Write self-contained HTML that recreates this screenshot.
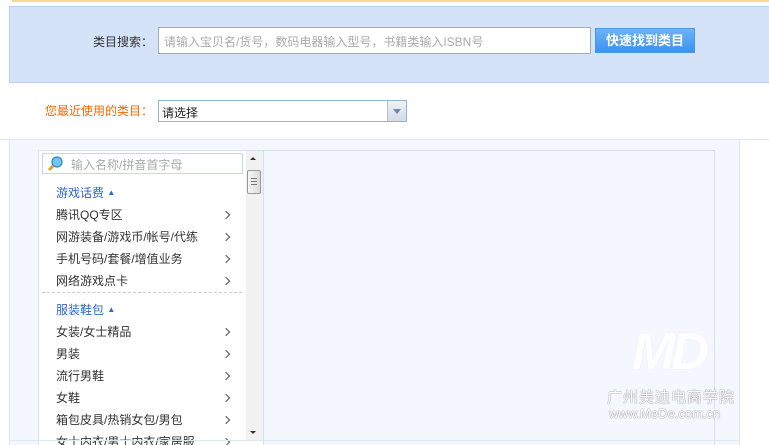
<!DOCTYPE html>
<html><head><meta charset="utf-8"><style>
*{margin:0;padding:0;box-sizing:border-box}
html,body{width:769px;height:445px;overflow:hidden}
body{background:#fff;font-family:"Liberation Sans","Noto Sans CJK SC",sans-serif;font-size:12px;color:#333;position:relative}
.a{position:absolute}
.r{position:relative;height:22px}
.r i{position:absolute;right:17px;top:8px;width:6px;height:6px;border-right:1px solid #555;border-top:1px solid #555;transform:rotate(45deg)}
</style></head><body>
<div class="a" style="left:12px;top:0;width:757px;height:2px;background:#fcd98f"></div>
<div class="a" style="left:9px;top:6px;width:770px;height:77px;background:#d5e3f9;border:1px solid #b9d0ef"></div>
<div class="a" style="left:93px;top:33px;font-size:12px;color:#333">类目搜索：</div>
<div class="a" style="left:158px;top:27px;width:433px;height:27px;background:#fff;border:1px solid #a5acb5;color:#aaa;padding:5px 0 0 5px">请输入宝贝名/货号，数码电器输入型号，书籍类输入ISBN号</div>
<div class="a" style="left:595px;top:28px;width:100px;height:25px;background:linear-gradient(#6db3f8,#3b92f0);border:1px solid #4a97e8;color:#fff;font-weight:bold;font-size:13px;text-align:center;line-height:23px">快速找到类目</div>
<div class="a" style="left:45px;top:102px;color:#f56a00">您最近使用的类目：</div>
<div class="a" style="left:158px;top:100px;width:249px;height:22px;border:1px solid #8fb4d9;background:#fff;padding:3px 0 0 3px;color:#222">请选择</div>
<div class="a" style="left:387px;top:101px;width:19px;height:20px;background:linear-gradient(#eef2f6,#d2dbe5);border-left:1px solid #aebfd2"><div class="a" style="left:5px;top:8px;border:4px solid transparent;border-top:5px solid #6d88ab;border-bottom:0"></div></div>
<div class="a" style="left:0;top:139px;width:769px;height:1px;background:#dce6f4"></div>
<div class="a" style="left:9px;top:140px;width:731px;height:305px;background:#f4f7fe;border-left:1px solid #dce6f4;border-right:1px solid #dce6f4"></div>
<div class="a" style="left:263px;top:150px;width:452px;height:295px;border:1px solid #d3e1f7;border-bottom:0"></div>
<div class="a" style="left:38px;top:150px;width:226px;height:295px;background:#fff;border:1px solid #d3e1f7;border-bottom:0;overflow:hidden">
<div class="a" style="left:17px;top:31px;line-height:22px;font-size:12px;width:190px">
<div style="color:#2f68c8;height:22px">游戏话费 <span style="font-size:8px;vertical-align:2px">▲</span></div>
<div class="r">腾讯QQ专区<i></i></div>
<div class="r">网游装备/游戏币/帐号/代练<i></i></div>
<div class="r">手机号码/套餐/增值业务<i></i></div>
<div class="r">网络游戏点卡<i></i></div>
<div style="height:7px"></div>
<div style="color:#2f68c8;height:22px">服装鞋包 <span style="font-size:8px;vertical-align:2px">▲</span></div>
<div class="r">女装/女士精品<i></i></div>
<div class="r">男装<i></i></div>
<div class="r">流行男鞋<i></i></div>
<div class="r">女鞋<i></i></div>
<div class="r">箱包皮具/热销女包/男包<i></i></div>
<div class="r">女士内衣/男士内衣/家居服<i></i></div>
</div>
</div>
<div class="a" style="left:246px;top:151px;width:17px;height:289px;background:#f1f1f1"></div>
<div class="a" style="left:250px;top:157px;border:3px solid transparent;border-bottom:3px solid #333;border-top:0"></div>
<div class="a" style="left:247px;top:170px;width:14px;height:24px;background:linear-gradient(90deg,#f5f5f5,#dcdcdc);border:1px solid #999;border-radius:2px"></div>
<div class="a" style="left:251px;top:178px;width:6px;height:7px;border-top:1px solid #777;border-bottom:1px solid #777"><div style="margin-top:2px;border-top:1px solid #777"></div></div>
<div class="a" style="left:250px;top:431px;border:3px solid transparent;border-top:3px solid #333;border-bottom:0"></div>
<div class="a" style="left:9px;top:440px;width:731px;height:1px;background:#dce6f4"></div>
<div class="a" style="left:42px;top:153px;width:201px;height:21px;border:1px solid #c5d8f2;color:#aaa;padding:2px 0 0 28px;background:#fff">输入名称/拼音首字母</div>
<svg class="a" style="left:47px;top:155px" width="18" height="17"><circle cx="10" cy="7" r="5" fill="#6cc7f5" stroke="#3a86b8" stroke-width="1.2"/><line x1="6" y1="11" x2="2" y2="15" stroke="#e3a020" stroke-width="3"/></svg>
<div class="a" style="left:42px;top:292px;width:200px;border-top:1px dashed #ccc"></div>
<div class="a" style="left:632px;top:322px;font-size:52px;font-weight:bold;font-style:italic;color:#fff;letter-spacing:-4px;text-shadow:0 0 1px #e0e4ea">MD</div>
<div class="a" style="left:607px;top:386px;font-size:15px;color:#fff;letter-spacing:1px;text-shadow:0 0 1px #888,0 0 1px #888">广州美迪电商学院</div>
<div class="a" style="left:609px;top:406px;font-size:13px;color:#fff;text-shadow:0 0 1px #888,0 0 1px #888">www.MeDe.com.cn</div>
</body></html>
